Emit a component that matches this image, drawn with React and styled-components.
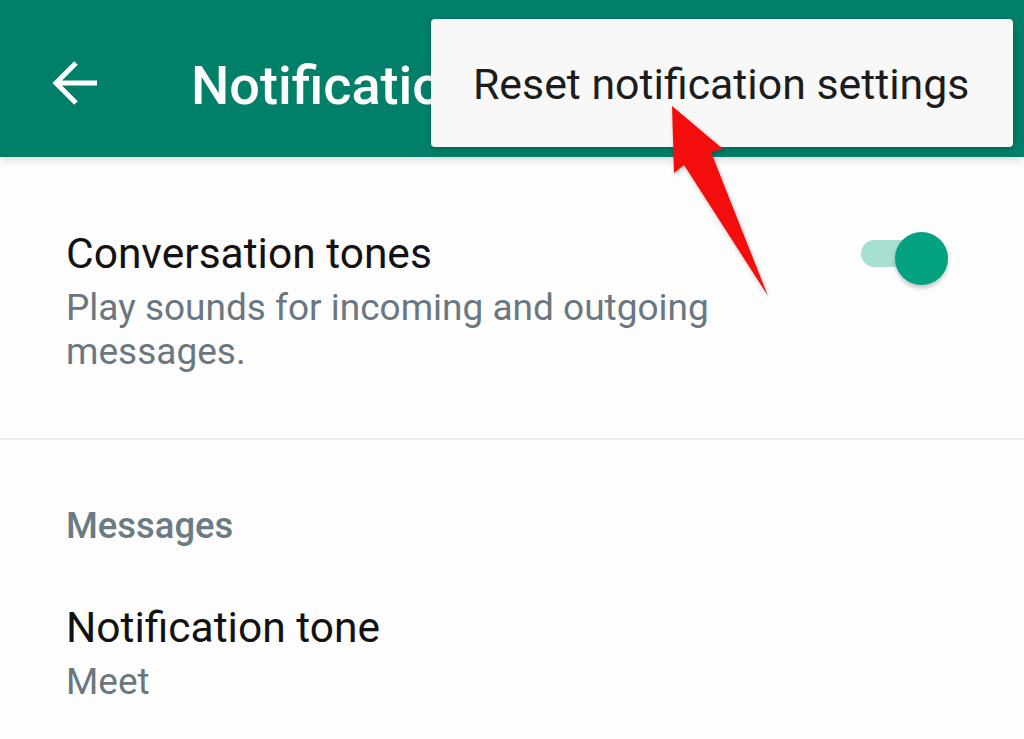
import React from 'react';
import styled, { createGlobalStyle } from 'styled-components';

const GlobalStyle = createGlobalStyle`
  html, body {
    margin: 0;
    padding: 0;
    background: #fdfdfd;
    font-family: Roboto, 'Noto Sans', sans-serif;
  }
`;

const Screen = styled.div`
  position: relative;
  width: 1024px;
  height: 739px;
  overflow: hidden;
  background: #fdfdfd;
  display: flex;
  flex-direction: column;
`;

const AppBar = styled.header`
  height: 157px;
  box-sizing: border-box;
  padding: 14px 0 0 52px;
  background: #008069;
  display: flex;
  align-items: center;
  box-shadow: 0 3px 8px rgba(0, 0, 0, 0.14);
  position: relative;
  z-index: 1;
`;

const BackButton = styled.button`
  width: 48px;
  height: 48px;
  padding: 0;
  margin: 0 91px 5px 0;
  border: none;
  background: none;
  display: flex;
`;

const Title = styled.h1`
  margin: 0;
  font-size: 54px;
  line-height: 54px;
  font-weight: 500;
  color: #ffffff;
  white-space: nowrap;
`;

const Menu = styled.div`
  position: absolute;
  top: 19px;
  left: 431px;
  width: 582px;
  height: 128px;
  box-sizing: border-box;
  padding: 41px 0 0 42px;
  background: #f8f8f8;
  border-radius: 4px;
  box-shadow: 0 2px 6px rgba(0, 0, 0, 0.22);
  z-index: 2;
`;

const MenuItem = styled.div`
  font-size: 42.8px;
  line-height: 48px;
  color: #1c1c1c;
  white-space: nowrap;
`;

const Pointer = styled.svg`
  position: absolute;
  left: 660px;
  top: 95px;
  z-index: 3;
  overflow: visible;
`;

const Content = styled.main`
  display: flex;
  flex-direction: column;
`;

const SettingRow = styled.div`
  display: flex;
  justify-content: space-between;
  align-items: flex-start;
  padding: 0 76px 0 66px;
  margin-top: ${(p) => p.$top}px;
`;

const TextBlock = styled.div`
  display: flex;
  flex-direction: column;
  gap: 8px;
  max-width: 680px;
`;

const SettingTitle = styled.div`
  font-size: 42.5px;
  line-height: 48px;
  color: #121212;
`;

const SettingSub = styled.div`
  font-size: 37px;
  line-height: 44px;
  color: #6a7780;
`;

const Toggle = styled.div`
  position: relative;
  width: 87px;
  height: 53px;
  margin-top: 2px;
  flex-shrink: 0;
`;

const Track = styled.div`
  position: absolute;
  left: 0;
  top: 8px;
  width: 62px;
  height: 27px;
  border-radius: 14px;
  background: #a6dfd1;
`;

const Thumb = styled.div`
  position: absolute;
  right: 0;
  top: 0;
  width: 53px;
  height: 53px;
  border-radius: 50%;
  background: #02a281;
  box-shadow: 0 3px 4px rgba(0, 0, 0, 0.22);
`;

const Divider = styled.hr`
  margin: 64px 0 0;
  border: none;
  height: 2px;
  background: #ececec;
`;

const SectionLabel = styled.div`
  margin-top: 64px;
  padding-left: 66px;
  font-size: 36.4px;
  line-height: 44px;
  font-weight: 500;
  color: #6b7b84;
`;

const BackArrow = () => (
  <svg width="48" height="48" viewBox="0 0 48 48">
    <path
      d="M45 24H5 M24 4 L4 24 L24 44"
      fill="none"
      stroke="#ffffff"
      strokeWidth="5"
      strokeLinejoin="miter"
    />
  </svg>
);

export default function App() {
  return (
    <Screen>
      <GlobalStyle />
      <AppBar>
        <BackButton aria-label="Back">
          <BackArrow />
        </BackButton>
        <Title>Notifications</Title>
      </AppBar>

      <Menu>
        <MenuItem>Reset notification settings</MenuItem>
      </Menu>

      <Pointer width="120" height="215" viewBox="0 0 120 215">
        <defs>
          <filter id="drop" x="-20%" y="-20%" width="140%" height="140%">
            <feDropShadow dx="1" dy="2" stdDeviation="2" floodColor="#000" floodOpacity="0.25" />
          </filter>
        </defs>
        <polygon
          points="12,11 63,54 51,57 108,201 24,70 14,78"
          fill="#f40d0d"
          filter="url(#drop)"
        />
      </Pointer>

      <Content>
        <SettingRow $top={73}>
          <TextBlock>
            <SettingTitle>Conversation tones</SettingTitle>
            <SettingSub>Play sounds for incoming and outgoing messages.</SettingSub>
          </TextBlock>
          <Toggle>
            <Track />
            <Thumb />
          </Toggle>
        </SettingRow>

        <Divider />

        <SectionLabel>Messages</SectionLabel>

        <SettingRow $top={56}>
          <TextBlock>
            <SettingTitle>Notification tone</SettingTitle>
            <SettingSub>Meet</SettingSub>
          </TextBlock>
        </SettingRow>
      </Content>
    </Screen>
  );
}
